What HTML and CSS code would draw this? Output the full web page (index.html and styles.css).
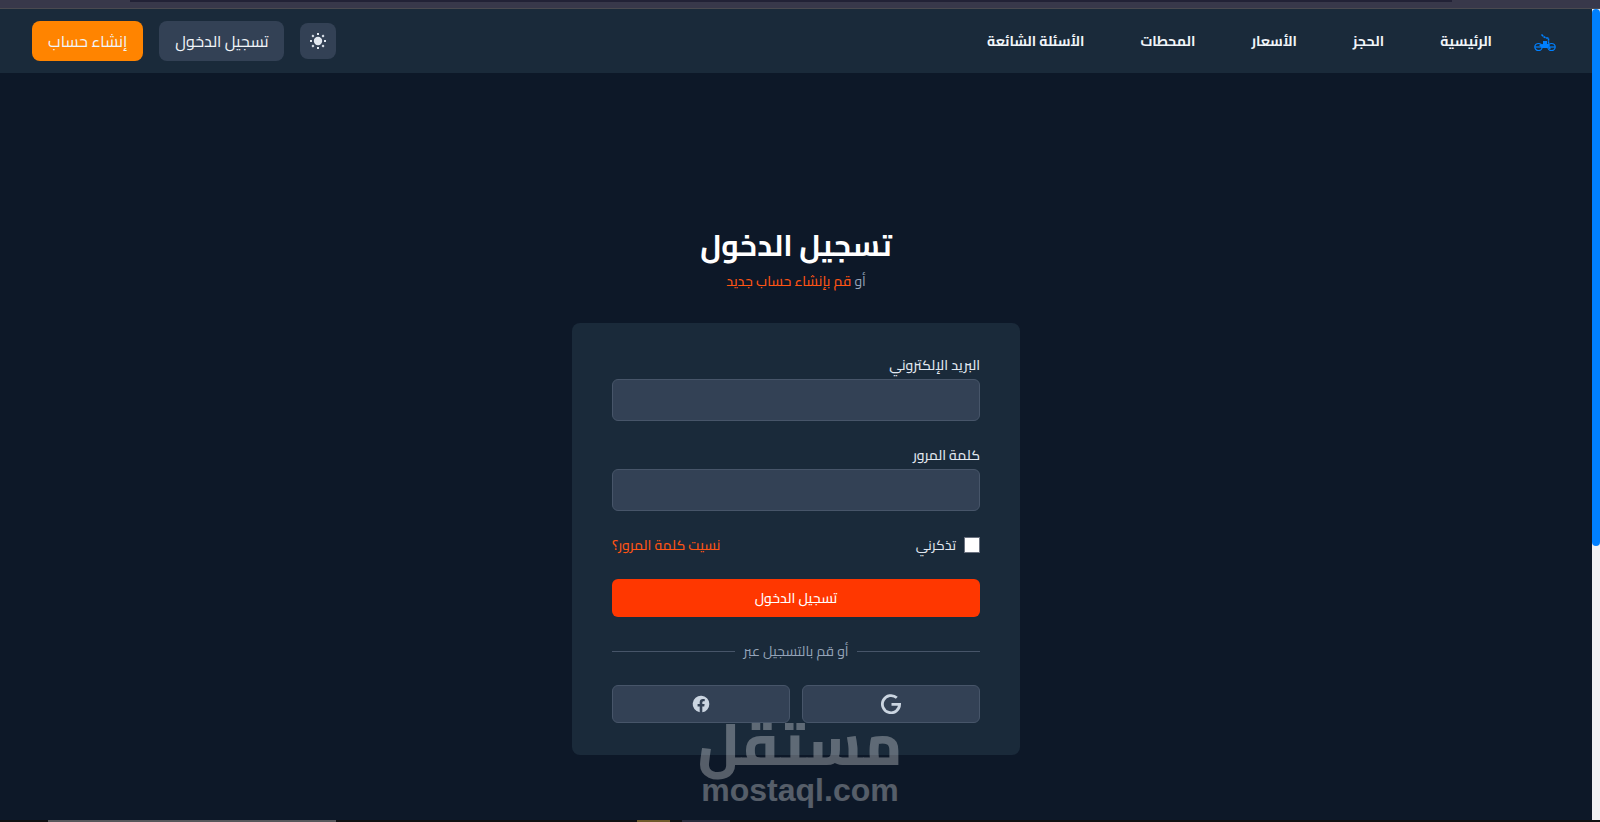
FILE: index.html
```
<!DOCTYPE html>
<html lang="ar" dir="rtl">
<head>
<meta charset="utf-8">
<title>تسجيل الدخول</title>
<link rel="stylesheet" href="styles.css">
</head>
<body>
<div class="window-top"><div class="address-bar"></div></div>
<div class="viewport">
  <div class="scroll-track"><div class="scroll-thumb"></div></div>
  <div class="app">
    <header class="header">
      <nav class="nav">
        <a class="logo" href="#" aria-label="الصفحة الرئيسية">
          <svg width="22" height="18" viewBox="0 0 22 18" fill="none" stroke="#0080ff">
            <ellipse cx="4.500" cy="13" rx="3.700" ry="3.500" stroke-width="1.200"/>
            <ellipse cx="17.500" cy="13" rx="3.700" ry="3.500" stroke-width="1.200"/>
            <path d="M1 13h20" stroke-width="1.200"/>
            <path d="M9 7h4v3h2l-1 4H8l-3-3 4-1z" fill="#0080ff" stroke="none"/>
            <path d="M7.500 .500l2.500 2.500 2 1h2.500v6l1.500 5" stroke-width="1.500" stroke-dasharray="2.400 .500"/>
          </svg>
        </a>
        <a class="nav-link" href="#">الرئيسية</a>
        <a class="nav-link" href="#">الحجز</a>
        <a class="nav-link" href="#">الأسعار</a>
        <a class="nav-link" href="#">المحطات</a>
        <a class="nav-link" href="#">الأسئلة الشائعة</a>
      </nav>
      <div class="actions">
        <button class="theme" type="button" aria-label="الوضع الفاتح">
          <svg width="16" height="16" viewBox="0 0 16 16" fill="#e2e8f0" stroke="#e2e8f0" stroke-width="2">
            <circle cx="8" cy="8" r="4.200" stroke="none"/>
            <path d="M8 0v2M8 14v2M0 8h2M14 8h2M2.200 2.200l1.500 1.500M12.300 12.300l1.500 1.500M13.800 2.200l-1.500 1.500M3.700 12.300l-1.500 1.500"/>
          </svg>
        </button>
        <button class="action" type="button">تسجيل الدخول</button>
        <button class="action action-signup" type="button">إنشاء حساب</button>
      </div>
    </header>
    <main class="main">
      <h1 class="title">تسجيل الدخول</h1>
      <p class="subtitle">أو <a class="accent" href="#">قم بإنشاء حساب جديد</a></p>
      <form class="card">
        <div class="field">
          <label for="email">البريد الإلكتروني</label>
          <input class="text-input" id="email" type="email">
        </div>
        <div class="field">
          <label for="password">كلمة المرور</label>
          <input class="text-input" id="password" type="password">
        </div>
        <div class="options">
          <div class="remember">
            <input class="check" id="remember" type="checkbox">
            <label for="remember">تذكرني</label>
          </div>
          <a class="accent" href="#">نسيت كلمة المرور؟</a>
        </div>
        <button class="submit" type="submit">تسجيل الدخول</button>
        <div class="divider"><span>أو قم بالتسجيل عبر</span></div>
        <div class="social">
          <button class="social-button" type="button" aria-label="Google">
            <svg width="20" height="20" viewBox="0 0 20 20" fill="none" stroke="#cbd5e1" stroke-width="2.800">
              <path d="M15.800 3.800A8.600 8.600 0 1 0 18.600 10.300H10.500"/>
            </svg>
          </button>
          <button class="social-button" type="button" aria-label="Facebook">
            <svg width="20" height="20" viewBox="0 0 24 24" fill="#cbd5e1">
              <path d="M22 12a10 10 0 1 0-11.560 9.880v-6.990H7.900V12h2.540V9.800c0-2.510 1.490-3.890 3.780-3.890 1.090 0 2.240.190 2.240.190v2.460H15.200c-1.240 0-1.630.770-1.630 1.560V12h2.770l-.440 2.890h-2.330v6.990A10 10 0 0 0 22 12z"/>
            </svg>
          </button>
        </div>
      </form>
    </main>
    <div class="watermark">
      <span class="watermark-name">مستقل</span>
      <span class="watermark-site" dir="ltr">mostaql.com</span>
    </div>
  </div>
</div>
<div class="window-bottom"><i class="task task-search"></i><i class="task task-folder"></i><i class="task task-app"></i></div>
</body>
</html>
```
FILE: styles.css
```
* { box-sizing: border-box; }
body {
  margin: 0;
  min-height: 100vh;
  display: flex;
  flex-direction: column;
  background: #0d1828;
  color: #e2e8f0;
  font-family: Cairo, "DejaVu Sans", sans-serif;
  font-size: 14px;
  line-height: 20px;
}
button, input { font: inherit; color: inherit; }
a { color: inherit; text-decoration: none; }
svg { display: block; }

.window-top {
  height: 9px;
  padding: 0 148px 0 130px;
  background: #38384a;
  border-bottom: 1px solid #4a4a50;
}
.address-bar { height: 2px; background: #222236; }
.viewport { flex: 1; display: flex; flex-direction: row; }
.scroll-track { width: 8px; background: #f1f1f3; }
.scroll-thumb { height: 72%; min-height: 537px; max-height: 537px; background: #0080ff; border-radius: 4px; }
.app { flex: 1; position: relative; }

.header {
  height: 64px;
  padding: 0 36px 0 32px;
  display: flex;
  align-items: center;
  justify-content: space-between;
  background: #1a2a3a;
}
.nav { display: flex; align-items: center; gap: 56px; }
.logo { margin-left: -14px; padding-top: 4px; }
.nav-link { font-weight: 700; color: #f1f5f9; }
.actions { display: flex; align-items: center; gap: 16px; }
.theme, .action { border: 0; border-radius: 8px; background: #334155; color: #f1f5f9; }
.theme { width: 36px; height: 36px; padding: 10px; }
.action { height: 40px; padding: 0 16px; font-size: 16px; }
.action-signup { background: #ff8400; }

.main {
  padding: 154px 16px 65px;
  display: flex;
  flex-direction: column;
  align-items: center;
}
.title { margin: 0 0 8px; font-size: 30px; line-height: 36px; font-weight: 700; color: #fff; }
.subtitle { margin: 0 0 32px; color: #94a3b8; }
.accent { font-weight: 500; color: #ff5414; }
.card {
  width: 100%;
  max-width: 448px;
  padding: 32px 40px;
  display: flex;
  flex-direction: column;
  gap: 24px;
  border-radius: 8px;
  background: #1a2a3a;
}
.field { display: flex; flex-direction: column; gap: 4px; font-weight: 500; }
.text-input, .social-button { border: 1px solid #475569; border-radius: 6px; background: #334155; }
.text-input { width: 100%; height: 42px; padding: 0 12px; }
.options, .remember { display: flex; align-items: center; }
.options { justify-content: space-between; }
.remember { gap: 8px; }
.check {
  appearance: none;
  width: 16px;
  height: 16px;
  margin: 0;
  border: 1px solid #6b7280;
  background: #fff;
}
.check:checked { background: #ff3700; }
.submit { height: 38px; border: 0; border-radius: 6px; background: #ff3700; color: #fff; font-weight: 500; }
.divider { display: flex; align-items: center; gap: 8px; color: #94a3b8; }
.divider::before, .divider::after { content: ""; flex: 1; height: 1px; background: #475569; }
.social { display: grid; grid-template-columns: 1fr 1fr; gap: 12px; }
.social-button { height: 38px; display: flex; align-items: center; justify-content: center; }

.watermark {
  position: absolute;
  right: 0;
  left: 8px;
  bottom: 14px;
  display: flex;
  flex-direction: column;
  align-items: center;
  color: #fff;
  opacity: .3;
  pointer-events: none;
}
.watermark-name { font-size: 58px; line-height: 60px; font-weight: 800; }
.watermark-site { font-family: "Liberation Sans", Arial, sans-serif; font-size: 32px; line-height: 32px; font-weight: 700; }

.window-bottom { height: 2px; display: flex; direction: ltr; padding-left: 48px; background: #101012; }
.task { height: 2px; }
.task-search { width: 288px; background: #58585c; }
.task-folder { width: 33px; margin-left: 301px; background: #6f5a2b; }
.task-app { width: 48px; margin-left: 12px; background: #2a2b3c; }
```
